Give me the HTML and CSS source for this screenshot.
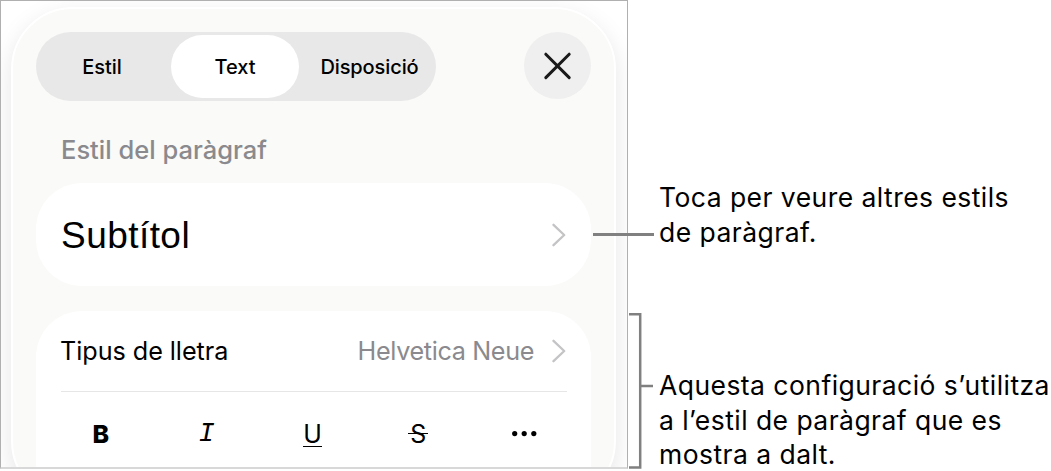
FILE: index.html
```html
<!DOCTYPE html>
<html lang="ca">
<head>
  <meta charset="UTF-8" />
  <meta name="viewport" content="width=device-width, initial-scale=1" />
  <title>Estil del paràgraf</title>
  <link rel="stylesheet" href="styles.css">
</head>
<body>
  <div class="figure">
    <div class="screen">
      <div class="panel">
        <div class="toolbar">
          <div class="tabs">
            <span class="tab tab-style">Estil</span>
            <span class="tab tab-text active">Text</span>
            <span class="tab tab-layout">Disposició</span>
          </div>
          <button class="close" aria-label="Tanca">
            <svg width="30" height="30" viewBox="0 0 30 30"><path d="M2.8 3.2L26.2 26.6M26.2 3.2L2.8 26.6" /></svg>
          </button>
        </div>

        <h2>Estil del paràgraf</h2>

        <div class="card style-card">
          <span class="style-name">Subtítol</span>
          <svg class="chevron" width="14" height="24" viewBox="0 0 14 24"><path d="M1.5 1.8L12.2 12L1.5 22.2" /></svg>
        </div>

        <div class="card font-card">
          <div class="font-row">
            <span class="font-label">Tipus de lletra</span>
            <span class="font-value">Helvetica Neue</span>
            <svg class="chevron" width="14" height="24" viewBox="0 0 14 24"><path d="M1.5 1.8L12.2 12L1.5 22.2" /></svg>
          </div>
          <div class="format-row">
            <span class="format"><b>B</b></span>
            <span class="format"><i>I</i></span>
            <span class="format"><span class="underline">U</span></span>
            <span class="format"><span class="strike">S</span></span>
            <span class="format">
              <svg width="26" height="6" viewBox="0 0 26 6"><circle cx="3.7" cy="2.6" r="2.6" /><circle cx="13.2" cy="2.6" r="2.6" /><circle cx="22.8" cy="2.6" r="2.6" /></svg>
            </span>
          </div>
        </div>
      </div>
    </div>

    <div class="notes">
      <p class="note note-top">Toca per veure altres estils<br>de paràgraf.</p>
      <div class="note-group">
        <svg class="bracket" width="25" height="158" viewBox="0 0 25 158"><path d="M0 2.2H11.2V155.5H0M11.2 74H24" /></svg>
        <p class="note">Aquesta configuració s’utilitza<br>a l’estil de paràgraf que es<br>mostra a dalt.</p>
      </div>
    </div>
    <div class="leader"></div>
  </div>
</body>
</html>
```
FILE: styles.css
```css
* {
  box-sizing: border-box;
}
body {
  margin: 0;
  background: #fff;
  color: #000;
  font-family: Inter, "Liberation Sans", sans-serif;
  overflow: hidden;
}
.figure {
  position: relative;
  display: flex;
  width: 1051px;
  height: 471px;
}
.screen {
  width: 628px;
  height: 469px;
  padding: 6px 11px 0 10px;
  border: 1px solid #b0b0b0;
  border-bottom: 2px solid #d8d8d8;
  overflow: hidden;
}
.panel {
  height: 496px;
  padding: 23px 23px 0;
  border: 2px solid #fff;
  border-radius: 62px;
  background: #fafaf8;
  box-shadow: 0 8px 24px rgba(0, 0, 0, 0.1);
}
.toolbar {
  display: flex;
  justify-content: space-between;
  align-items: flex-start;
}
.tabs {
  display: flex;
  width: 400px;
  height: 69px;
  padding: 3px;
  border-radius: 35px;
  background: #e8e8e8;
  font-size: 20px;
  font-weight: 500;
}
.tab {
  display: flex;
  align-items: center;
  justify-content: center;
  width: 132px;
  height: 63px;
}
.tab-style {
  padding-right: 6px;
}
.tab-text {
  width: 128px;
}
.tab-layout {
  padding-left: 9px;
  letter-spacing: -0.1px;
}
.active {
  border-radius: 32px;
  background: #fff;
}
.close {
  display: flex;
  align-items: center;
  justify-content: center;
  width: 67px;
  height: 67px;
  padding: 0;
  border: none;
  border-radius: 50%;
  background: #efefef;
}
.close path {
  fill: none;
  stroke: #1a1a1a;
  stroke-width: 3;
  stroke-linecap: round;
}
h2 {
  height: 82px;
  margin: 0;
  padding: 33px 25px 0;
  color: #8a8a8e;
  font-size: 25.5px;
  font-weight: 450;
  line-height: 32px;
}
.card {
  padding: 0 25px;
  border-radius: 46px;
  background: #fff;
}
.style-card {
  display: flex;
  align-items: center;
  justify-content: space-between;
  height: 103px;
  margin-bottom: 25px;
}
.style-name {
  padding-top: 2px;
  font-family: "Liberation Sans", sans-serif;
  font-size: 37px;
  letter-spacing: 0.45px;
}
.chevron path {
  fill: none;
  stroke: #c4c4c6;
  stroke-width: 2.3;
  stroke-linecap: round;
  stroke-linejoin: round;
}
.font-card {
  height: 240px;
}
.font-row {
  display: flex;
  align-items: center;
  height: 81px;
  margin-right: -1px;
  padding-right: 1px;
  border-bottom: 1px solid #e6e6e6;
  font-size: 25.2px;
}
.font-label {
  margin-left: -1px;
  letter-spacing: -0.05px;
}
.font-value {
  margin: 0 18px 0 auto;
  color: #8a8a8e;
  letter-spacing: -0.36px;
}
.format-row {
  display: flex;
  height: 84px;
  margin: 0 -11px 0 -13px;
}
.format {
  display: flex;
  flex: 1;
  align-items: center;
  justify-content: center;
  font-size: 25px;
}
.format b {
  font-weight: 800;
}
.format i {
  font-family: "Liberation Mono", monospace;
  font-size: 27px;
}
.underline {
  height: 25px;
  border-bottom: 1px solid #000;
  line-height: 24px;
}
.strike {
  position: relative;
}
.strike::after {
  content: "";
  position: absolute;
  top: 14px;
  left: -2px;
  right: -2px;
  height: 1px;
  background: #000;
}
.notes {
  width: 423px;
}
.note {
  margin: 0;
  font-size: 26.5px;
  letter-spacing: 0.45px;
  line-height: 34.6px;
  white-space: nowrap;
}
.note-top {
  padding: 180px 0 0 31px;
  height: 312px;
}
.note-group {
  display: flex;
  padding-left: 1px;
}
.note-group .note {
  padding: 56px 0 0 5px;
}
.bracket path {
  fill: none;
  stroke: #808080;
  stroke-width: 2.5;
}
.leader {
  position: absolute;
  top: 233px;
  left: 593px;
  width: 61px;
  height: 3px;
  background: #808080;
}
```
